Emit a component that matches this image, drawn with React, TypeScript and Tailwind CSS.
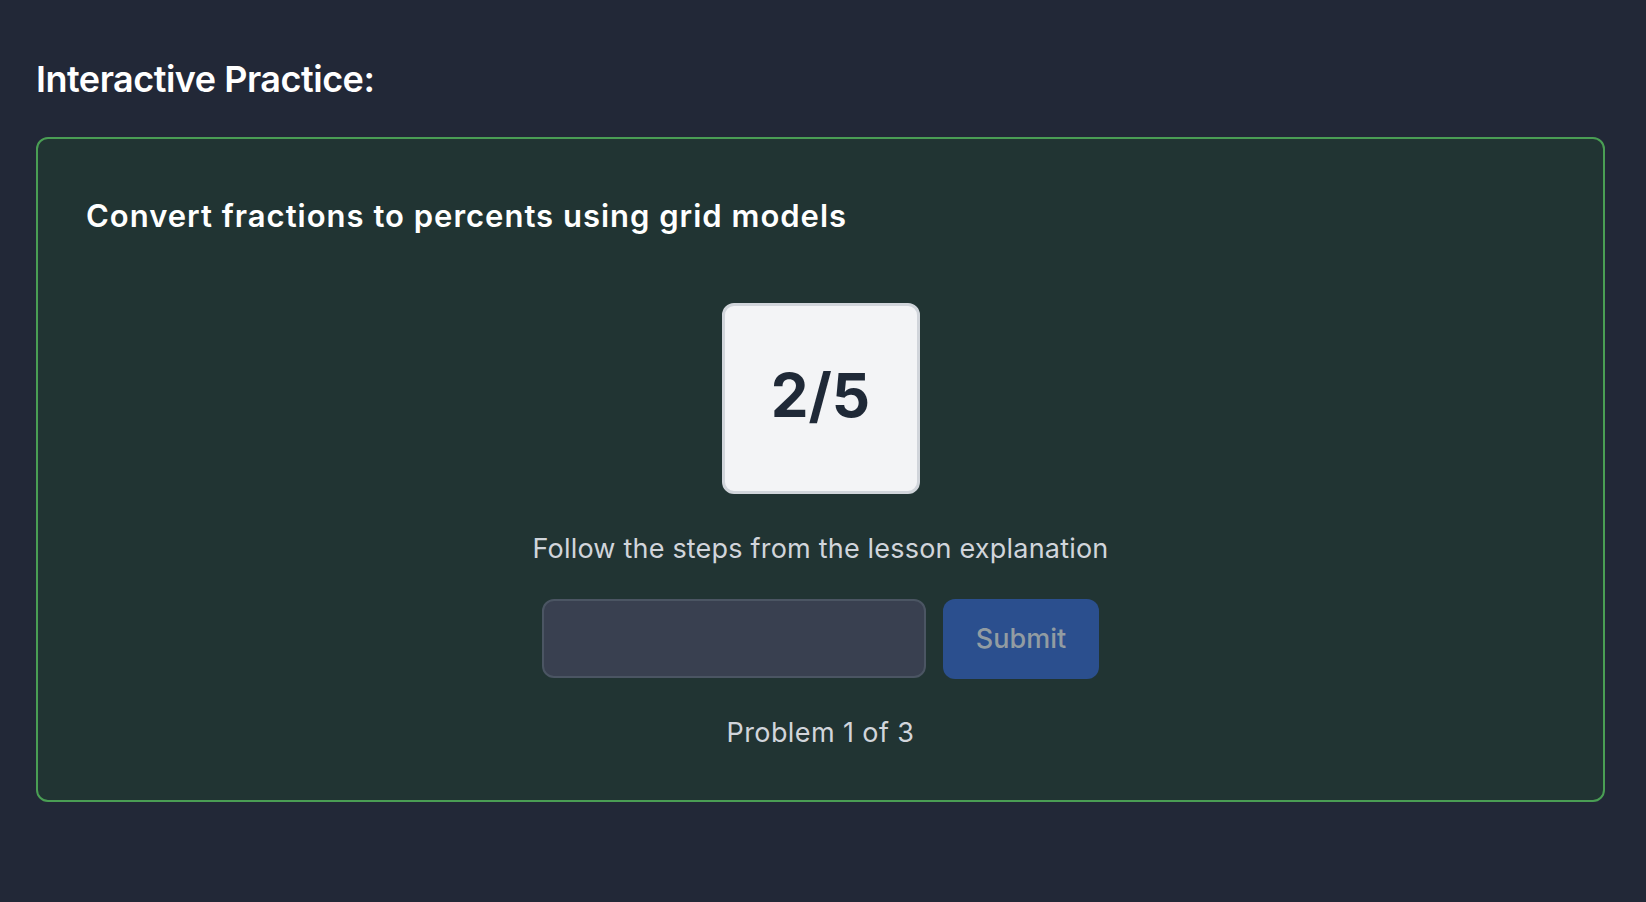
import React from 'react';

export default function App() {
  return (
    <div className="min-h-screen bg-[#222837] pl-[36px] pr-[41px] pt-[55px] pb-[36px] font-['Inter','Noto_Sans',sans-serif]">
      <h2 className="text-[36px] leading-[48px] font-semibold tracking-[-0.5px] text-white mb-[34px]">
        Interactive Practice:
      </h2>

      <div className="rounded-[12px] border-2 border-[#4a9e54] bg-[#213433] px-[48px] pt-[56px] pb-[46px]">
        <h3 className="text-[31px] leading-[42px] font-semibold tracking-[1px] text-white">
          Convert fractions to percents using grid models
        </h3>

        <div className="flex flex-col items-center mt-[66px]">
          <div className="w-[198px] h-[191px] flex items-center justify-center rounded-[12px] border-[3px] border-[#d1d5db] bg-[#f3f4f6]">
            <span className="text-[60px] font-bold text-[#1f2937] -mt-[8px]">2/5</span>
          </div>

          <p className="mt-[34px] text-[27px] leading-[42px] tracking-[0.2px] text-[#d1d5db]">
            Follow the steps from the lesson explanation
          </p>

          <div className="mt-[29px] flex gap-[17px]">
            <input
              type="text"
              className="w-[384px] h-[79px] rounded-[12px] border-2 border-[#4b5563] bg-[#394050] px-[24px] text-[27px] text-white outline-none"
            />
            <button
              disabled
              className="w-[156px] h-[80px] rounded-[12px] bg-[#2b4f8e] text-[27px] font-medium text-[#929ca2]"
            >
              Submit
            </button>
          </div>

          <p className="mt-[33px] text-[27px] leading-[42px] tracking-[0.4px] text-[#d1d5db]">Problem 1 of 3</p>
        </div>
      </div>
    </div>
  );
}
